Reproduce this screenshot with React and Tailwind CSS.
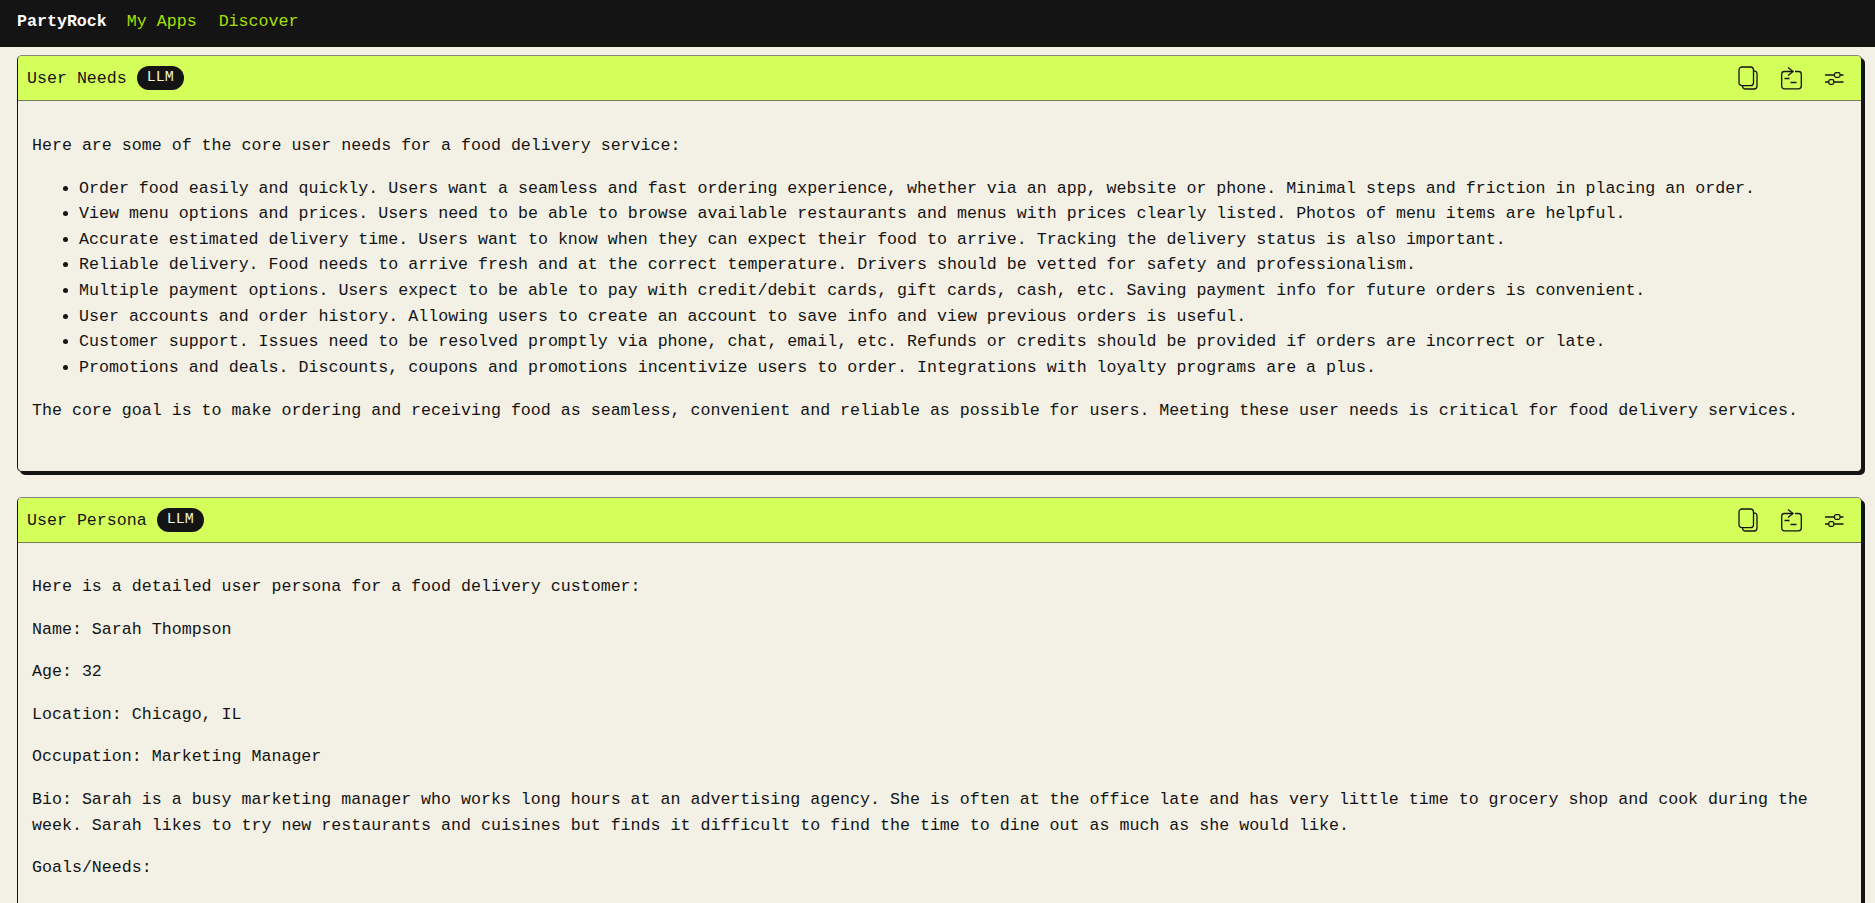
const MONO = 'font-["Liberation_Mono",monospace]'

const needs = [
  'Order food easily and quickly. Users want a seamless and fast ordering experience, whether via an app, website or phone. Minimal steps and friction in placing an order.',
  'View menu options and prices. Users need to be able to browse available restaurants and menus with prices clearly listed. Photos of menu items are helpful.',
  'Accurate estimated delivery time. Users want to know when they can expect their food to arrive. Tracking the delivery status is also important.',
  'Reliable delivery. Food needs to arrive fresh and at the correct temperature. Drivers should be vetted for safety and professionalism.',
  'Multiple payment options. Users expect to be able to pay with credit/debit cards, gift cards, cash, etc. Saving payment info for future orders is convenient.',
  'User accounts and order history. Allowing users to create an account to save info and view previous orders is useful.',
  'Customer support. Issues need to be resolved promptly via phone, chat, email, etc. Refunds or credits should be provided if orders are incorrect or late.',
  'Promotions and deals. Discounts, coupons and promotions incentivize users to order. Integrations with loyalty programs are a plus.',
]

function CopyIcon() {
  return (
    <svg width="20" height="24" viewBox="0 0 20 24" fill="none" stroke="#141414" strokeWidth="1.3">
      <rect x="1" y="1" width="14.500" height="18.700" rx="3" />
      <path d="M15.500 4.800c2 0 3.500 1 3.500 3V20c0 2-1 3-3 3H8c-2 0-3.500-1-3.500-3.300" />
    </svg>
  )
}

function ShareIcon() {
  return (
    <svg width="21" height="23" viewBox="0 0 21 23" fill="none" stroke="#141414" strokeWidth="1.3">
      <path d="M14 4.500h3.500c1.700 0 2.800 1 2.800 2.800v11.700c0 1.700-1.100 2.800-2.800 2.800h-14C1.800 21.800.7 20.700.7 19V7.300c0-1.800 1.100-2.800 2.800-2.800H12" />
      <path d="M7 .5l5 4-5 4" />
      <path d="M3.500 11.500h5M9.500 15.500h6" />
    </svg>
  )
}

function SlidersIcon() {
  return (
    <svg width="19" height="13" viewBox="0 0 19 13" fill="none" stroke="#141414" strokeWidth="1.3">
      <path d="M0 3h9.500M15 3h3.500M0 10h3.800M8.800 10h9.700" />
      <rect x="9.500" y=".7" width="5.500" height="4.600" rx="1.500" />
      <rect x="3.800" y="7.700" width="5" height="4.600" rx="1.500" />
    </svg>
  )
}

function Card({ title, children, className }) {
  return (
    <section className={`rounded-[5px] border border-[#141414] border-t-[#85857c] bg-[#f3f0e6] shadow-[3px_3px_0_#141414] ${className}`}>
      <header className="h-[45px] flex items-center justify-between bg-[#d4ff5a] border-b border-[#767c52] rounded-t-[4px] pl-[9px] pr-[17px]">
        <div className="flex items-center gap-[10px]">
          <span className="relative top-[1px]">{title}</span>
          <span className="h-[24px] w-[47px] flex items-center justify-center rounded-full bg-[#141414] text-[#f3f7d8] text-[15px]">LLM</span>
        </div>
        <div className="flex items-center gap-[23px]">
          <CopyIcon />
          <ShareIcon />
          <SlidersIcon />
        </div>
      </header>
      {children}
    </section>
  )
}

export default function App() {
  return (
    <div className={`h-screen overflow-hidden bg-[#f3f0e6] text-[#141414] ${MONO} text-[16.64px] leading-[25.6px]`}>
      <nav className="h-[47px] flex items-center bg-[#141414] pl-[17px] pb-[4px]">
        <span className="font-bold text-white">PartyRock</span>
        <a className="ml-[20px] text-[#a6e000]">My Apps</a>
        <a className="ml-[22px] text-[#a6e000]">Discover</a>
      </nav>

      <main className="pt-[8px] pl-[17px] pr-[13px]">
        <Card title="User Needs" className="h-[417px]">
          <div className="px-[14px] pt-[32px]">
            <p>Here are some of the core user needs for a food delivery service:</p>
            <ul className="mt-[17px] pl-[47px] list-disc">
              {needs.map(n => <li key={n}>{n}</li>)}
            </ul>
            <p className="mt-[18px]">The core goal is to make ordering and receiving food as seamless, convenient and reliable as possible for users. Meeting these user needs is critical for food delivery services.</p>
          </div>
        </Card>

        <Card title="User Persona" className="mt-[25px] min-h-[600px]">
          <div className="px-[14px] pt-[31px] space-y-[17px]">
            <p>Here is a detailed user persona for a food delivery customer:</p>
            <p>Name: Sarah Thompson</p>
            <p>Age: 32</p>
            <p>Location: Chicago, IL</p>
            <p>Occupation: Marketing Manager</p>
            <p>Bio: Sarah is a busy marketing manager who works long hours at an advertising agency. She is often at the office late and has very little time to grocery shop and cook during the week. Sarah likes to try new restaurants and cuisines but finds it difficult to find the time to dine out as much as she would like.</p>
            <p>Goals/Needs:</p>
          </div>
        </Card>
      </main>
    </div>
  )
}
